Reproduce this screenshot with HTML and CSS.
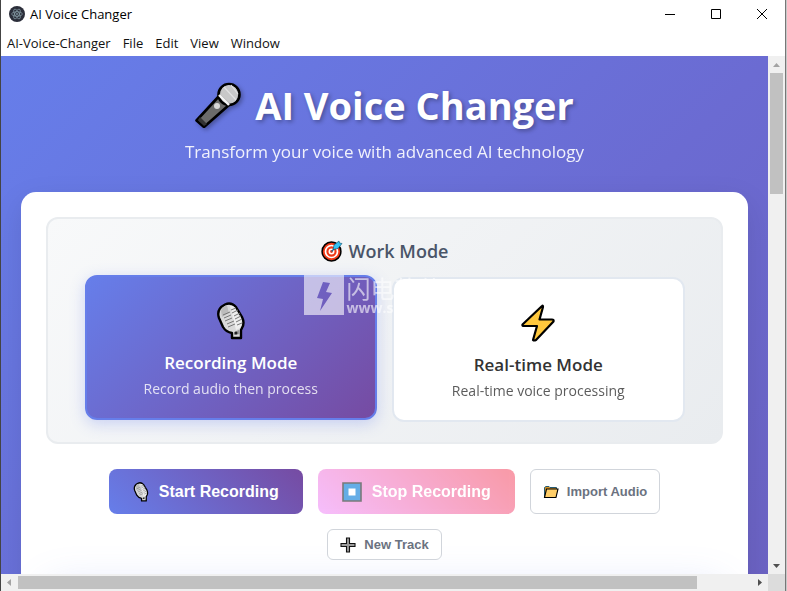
FILE: index.html
```html
<!DOCTYPE html>
<html lang="en">
<head>
    <meta charset="UTF-8">
    <meta name="viewport" content="width=device-width, initial-scale=1.0">
    <title>AI Voice Changer</title>
    <link rel="stylesheet" href="styles.css">
</head>
<body>
    <!-- Shared icons -->
    <svg class="icon-defs" aria-hidden="true">
        <symbol id="studio-mic" viewBox="0 0 28 38">
            <path d="M8 2.500Q14-.5 19 5L25 15Q28 21 25 26L24 28V36H15V31Q9 30 6 25L2 16Q-1 7 8 2.500Z" fill="#d9d9d9" stroke="#000" stroke-width="2.400" stroke-linejoin="round"/>
            <path d="M4 9Q5 4 10 3.500L12 11L5 15Z" fill="#bcbcbc"/>
            <path d="M13 4Q17 3 19 8L24 17Q26 22 23 26L19 28Z" fill="#eee"/>
            <path d="M6 13l7-3M7 16l7-3M8 19l7-3M10 22l7-3M11 25l7-3M14 8l5-2M15 11l6-3M17 14l6-3M18 17l6-3M19 20l6-3M20 23l5-2" stroke="#777" stroke-width="1"/>
            <path d="M17 30l5-2 1 4-6 1Z" fill="#999"/>
            <circle cx="19" cy="31" r="1.500" fill="#222"/>
        </symbol>
    </svg>

    <div class="window">
        <header class="titlebar">
            <svg class="app-icon" viewBox="0 0 16 16">
                <circle cx="8" cy="8" r="8" fill="#2b2e3a"/>
                <g fill="none" stroke="#b4d4dc" stroke-opacity=".65" stroke-width=".7">
                    <ellipse cx="8" cy="8" rx="5.400" ry="2.200"/>
                    <ellipse cx="8" cy="8" rx="5.400" ry="2.200" transform="rotate(60 8 8)"/>
                    <ellipse cx="8" cy="8" rx="5.400" ry="2.200" transform="rotate(120 8 8)"/>
                </g>
                <circle cx="8" cy="8" r=".8" fill="#b4d4dc"/>
            </svg>
            <span class="app-name">AI Voice Changer</span>
            <div class="window-controls">
                <button aria-label="Minimize"><svg viewBox="0 0 12 12"><path d="M1 6.500h10"/></svg></button>
                <button aria-label="Maximize"><svg viewBox="0 0 12 12"><path d="M1.500 1.500h9v9h-9z"/></svg></button>
                <button aria-label="Close"><svg viewBox="0 0 12 12"><path d="M1 1l10 10M11 1L1 11"/></svg></button>
            </div>
        </header>

        <nav class="menubar">
            <a href="#">AI-Voice-Changer</a>
            <a href="#">File</a>
            <a href="#">Edit</a>
            <a href="#">View</a>
            <a href="#">Window</a>
        </nav>

        <div class="viewport">
            <main class="page">
                <div class="header">
                    <h1>
                        <svg class="title-icon" viewBox="0 0 46 46">
                            <path d="M25 13L1.500 38.500L9 45L34 23Z" fill="#6b6b6b" stroke="#000" stroke-width="2.600" stroke-linejoin="round"/>
                            <path d="M5 35l7 7-3 2-6-6Z" fill="#333"/>
                            <circle cx="34" cy="12.500" r="10.500" fill="#b4b4b4" stroke="#000" stroke-width="2.600"/>
                            <path d="M26 13Q25 4 34 3Q42 4 43 12Q42 21 35 21Z" fill="#c8c8c8"/>
                            <path d="M29 5l12 13M36 3l7 9" stroke="#e2e2e2" stroke-width="1.200"/>
                            <path d="M24 13l10 10" stroke="#f4f4f4" stroke-width="2.400"/>
                            <circle cx="22" cy="24" r="3" fill="#d8d8d8"/>
                        </svg>
                        <span>AI Voice Changer</span>
                    </h1>
                    <p>Transform your voice with advanced AI technology</p>
                </div>

                <div class="main-card">
                    <section class="mode-selector">
                        <h2>
                            <svg class="target-icon" viewBox="0 0 22 22">
                                <circle cx="10.500" cy="11.500" r="9.400" fill="#f03a17" stroke="#000" stroke-width="1.500"/>
                                <circle cx="10.500" cy="11.500" r="6" fill="none" stroke="#fff" stroke-width="1.700"/>
                                <circle cx="10.500" cy="11.500" r="2.200" fill="none" stroke="#fff" stroke-width="1.600"/>
                                <path d="M10.500 11.500L15 7" stroke="#146b96" stroke-width="1.200"/>
                                <path d="M12 9.500L13 5L18 1L18.500 3L21 3.500L17 8.500Z" fill="#36c3f3" stroke="#0c4a68" stroke-width=".6"/>
                            </svg>
                            <span>Work Mode</span>
                        </h2>
                        <div class="mode-options">
                            <button class="mode-option active">
                                <svg class="mode-icon"><use href="#studio-mic"/></svg>
                                <span class="mode-title">Recording Mode</span>
                                <span class="mode-desc">Record audio then process</span>
                            </button>
                            <button class="mode-option">
                                <svg class="mode-icon bolt" viewBox="0 0 34 38">
                                    <path d="M21 2L1.500 20.500Q1 22 3 22H16L12 36Q13 37 15 36L32.500 17.500Q33 15.500 31 15.500H18.500L22 3Q22 1 21 2Z" fill="#ffc83d" stroke="#000" stroke-width="2.200" stroke-linejoin="round"/>
                                </svg>
                                <span class="mode-title">Real-time Mode</span>
                                <span class="mode-desc">Real-time voice processing</span>
                            </button>
                            <div class="watermark">
                                <svg viewBox="0 0 40 40">
                                    <path fill-rule="evenodd" d="M0 0H40V40H0ZM19 7L13 23L19 24L16 36L28 18L22 17L26 8Z" fill="#fff"/>
                                </svg>
                                <div>
                                    <span class="watermark-name">闪电软件园</span>
                                    <span class="watermark-url">www.s</span>
                                </div>
                            </div>
                        </div>
                    </section>

                    <div class="controls">
                        <button class="btn btn-primary">
                            <svg class="btn-icon narrow"><use href="#studio-mic"/></svg>
                            Start Recording
                        </button>
                        <button class="btn btn-stop">
                            <svg class="btn-icon" viewBox="0 0 20 20">
                                <path d="M1 1h18v18H1z" fill="#0078d7" stroke="#222" stroke-width="1.600"/>
                                <path d="M6.500 6.500h7v7h-7z" fill="#fff"/>
                            </svg>
                            Stop Recording
                        </button>
                        <button class="btn btn-outline">
                            <svg class="btn-icon small" viewBox="0 0 16 16">
                                <path d="M1.500 13V3.500L3 2.500h3l1 1h6.500V5" fill="#d99320" stroke="#245a72" stroke-width="1"/>
                                <path d="M3.500 5H15l-2 8.500H1.500Z" fill="#ffce68" stroke="#000" stroke-width="1.100"/>
                            </svg>
                            Import Audio
                        </button>
                        <button class="btn btn-outline compact">
                            <svg class="btn-icon small" viewBox="0 0 16 16">
                                <path d="M6.500 1h3v5.500H15v3H9.500V15h-3V9.500H1v-3h5.500Z" fill="#9b9b9b" stroke="#111" stroke-width="1.100"/>
                            </svg>
                            New Track
                        </button>
                    </div>
                    <div class="tracks"></div>
                </div>
            </main>

            <div class="scrollbar vertical">
                <svg viewBox="0 0 17 17"><path d="M5 11l3.500-4 3.500 4z" fill="#a3a3a3"/></svg>
                <div class="track"><div class="thumb"></div></div>
                <svg viewBox="0 0 17 17"><path d="M5 7l3.500 4L12 7z" fill="#505050"/></svg>
            </div>
            <div class="scrollbar horizontal">
                <svg viewBox="0 0 17 17"><path d="M10 5L6 8.500l4 3.500z" fill="#a3a3a3"/></svg>
                <div class="track"><div class="thumb"></div></div>
                <svg viewBox="0 0 17 17"><path d="M7 5l4 3.500L7 12z" fill="#505050"/></svg>
            </div>
            <div class="scroll-corner"></div>
        </div>
    </div>
</body>
</html>
```

FILE: styles.css
```css
* {
    box-sizing: border-box;
    margin: 0;
    padding: 0;
}
body {
    font-family: 'Segoe UI', 'Open Sans', 'Noto Sans CJK SC', sans-serif;
    background: #c8c8c8;
    color: #333;
    padding-right: 1px;
    overflow: hidden;
}
svg { display: block; flex-shrink: 0; }
.icon-defs { position: absolute; width: 0; height: 0; }
button { cursor: pointer; }
.window {
    display: flex;
    flex-direction: column;
    height: 100vh;
    background: white;
    border-left: 1px solid #444;
    border-right: 1px solid #777;
}

/* Title bar and menu */
.titlebar {
    display: flex;
    align-items: center;
    height: 28px;
    padding-left: 8px;
    font-size: 13px;
    color: #000;
}
.app-icon { width: 16px; height: 16px; margin-right: 5px; }
.window-controls { display: flex; margin-left: auto; }
.window-controls button {
    display: flex;
    align-items: center;
    justify-content: center;
    width: 46px;
    height: 28px;
    border: none;
    background: none;
}
.window-controls svg {
    width: 12px;
    height: 12px;
    fill: none;
    stroke: #000;
}
.menubar {
    display: flex;
    align-items: center;
    gap: 12px;
    height: 28px;
    padding: 2px 6px 0;
    font-size: 13px;
}
.menubar a { color: #111; text-decoration: none; }

/* Scrolling area */
.viewport {
    display: grid;
    grid-template-columns: 1fr 17px;
    grid-template-rows: 1fr 17px;
    flex: 1;
    min-height: 0;
}
.page {
    overflow: hidden;
    padding: 20px;
    background: linear-gradient(135deg, #667eea 0%, #6b6bd2 60%, #6c63c4 100%);
}
.scrollbar { display: flex; background: #f0f0f0; }
.scrollbar svg { width: 17px; height: 17px; }
.scrollbar .track { flex: 1; }
.scrollbar .thumb { background: #c1c1c1; }
.vertical { flex-direction: column; }
.vertical .track { padding: 0 2px; }
.vertical .thumb { height: 25%; }
.horizontal .track { padding: 2px 0; }
.horizontal .thumb { width: 92.6%; height: 100%; }
.scroll-corner { background: #dcdcdc; }

.header {
    height: 116px;
    text-align: center;
    color: white;
}
.header h1 {
    display: flex;
    align-items: center;
    justify-content: center;
    gap: 14px;
    height: 57px;
    margin-bottom: 7px;
    font-size: 38px;
    font-weight: 700;
    text-shadow: 2px 2px 4px rgba(0,0,0,0.3);
}
.title-icon {
    width: 46px;
    height: 46px;
    filter: drop-shadow(2px 2px 2px rgba(0,0,0,0.3));
}
.header p { font-size: 17px; line-height: 24px; opacity: 0.9; }

.main-card {
    padding: 25px;
    background: white;
    border-radius: 15px;
    box-shadow: 0 10px 30px rgba(0,0,0,0.1);
}

/* Work mode */
.mode-selector {
    padding: 20px;
    background: linear-gradient(135deg, #f8f9fa 0%, #e9ecef 100%);
    border: 2px solid #e9ecef;
    border-radius: 12px;
}
.mode-selector h2 {
    display: flex;
    align-items: center;
    justify-content: center;
    gap: 6px;
    height: 24px;
    margin-bottom: 14px;
    font-size: 18px;
    font-weight: 600;
    color: #4a5568;
}
.target-icon { width: 22px; height: 22px; }
.mode-options {
    position: relative;
    display: grid;
    grid-template-columns: 1fr 1fr;
    gap: 15px;
    max-width: 600px;
    margin: 0 auto;
}
.mode-option {
    display: flex;
    flex-direction: column;
    align-items: center;
    height: 145px;
    padding: 25px 18px 18px;
    font-family: inherit;
    color: #333;
    background: white;
    border: 2px solid #e2e8f0;
    border-radius: 12px;
}
.mode-option.active {
    color: white;
    background: linear-gradient(135deg, #667eea 0%, #764ba2 100%);
    border-color: #667eea;
    box-shadow: 0 4px 15px rgba(102,126,234,0.3);
    transform: translateY(-2px);
}
.mode-icon { width: 28px; height: 38px; margin-bottom: 11px; }
.mode-icon.bolt { width: 36px; }
.mode-title { font-size: 17px; font-weight: 600; line-height: 24px; margin-bottom: 4px; }
.mode-desc { font-size: 14px; line-height: 20px; opacity: 0.8; }

.watermark {
    position: absolute;
    top: -2px;
    left: 219px;
    display: flex;
    gap: 3px;
    color: white;
    opacity: 0.6;
    white-space: nowrap;
}
.watermark svg { width: 40px; height: 40px; }
.watermark span { display: block; }
.watermark-name {
    font-family: 'Noto Sans CJK SC', sans-serif;
    font-size: 24px;
    line-height: 25px;
}
.watermark-url { font-size: 14px; font-weight: 700; line-height: 16px; }

/* Buttons */
.controls {
    display: flex;
    flex-wrap: wrap;
    align-items: center;
    justify-content: center;
    gap: 15px;
    margin-top: 25px;
}
.btn {
    display: flex;
    align-items: center;
    gap: 10px;
    height: 45px;
    padding: 0 24px;
    font-family: Arial, 'Liberation Sans', sans-serif;
    font-size: 16px;
    font-weight: 600;
    color: white;
    border: none;
    border-radius: 8px;
}
.btn-icon { width: 20px; height: 20px; }
.btn-icon.narrow { width: 16px; }
.btn-icon.small { width: 16px; height: 16px; }
.btn-primary { background: linear-gradient(45deg, #667eea, #764ba2); }
.btn-stop {
    background: linear-gradient(45deg, #f093fb, #f5576c);
    opacity: 0.6;
}
.btn-outline {
    gap: 8px;
    padding: 0 12px;
    font-size: 13px;
    color: #6b7280;
    background: white;
    border: 1px solid #d1d5db;
    border-radius: 6px;
}
.btn-outline.compact { height: 31px; }
.tracks {
    height: 200px;
    margin-top: 25px;
    background: white;
    border-radius: 12px;
    box-shadow: 0 0 40px rgba(102,126,234,0.2);
}
```
